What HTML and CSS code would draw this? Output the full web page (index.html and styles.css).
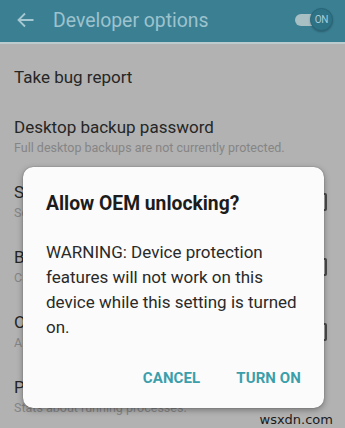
FILE: index.html
```html
<!DOCTYPE html>
<html>
<head>
<meta charset="utf-8">
<link rel="stylesheet" href="styles.css">
</head>
<body>
<div class="screen">
  <header class="appbar">
    <svg class="back" width="17" height="16" viewBox="0 0 17 16"><path d="M16.5 8H1.5M8 1.5L1.5 8 8 14.5" fill="none" stroke="#a6c8d2" stroke-width="1.8"/></svg>
    <span class="title">Developer options</span>
    <div class="toggle"><span class="track"></span><span class="thumb">ON</span></div>
  </header>
  <div class="list">
    <div class="item single"><div class="item-title">Take bug report</div></div>
    <div class="item"><div class="item-title">Desktop backup password</div><div class="item-sub">Full desktop backups are not currently protected.</div></div>
    <div class="item"><div class="texts"><div class="item-title">Stay awake</div><div class="item-sub">Screen will never sleep while charging.</div></div><span class="check"></span></div>
    <div class="item"><div class="texts"><div class="item-title">Bluetooth HCI snoop log</div><div class="item-sub">Capture all Bluetooth HCI packets in a file.</div></div><span class="check"></span></div>
    <div class="item"><div class="texts"><div class="item-title">OEM unlocking</div><div class="item-sub">Allow the bootloader to be unlocked.</div></div><span class="check"></span></div>
    <div class="item"><div class="item-title">Process stats</div><div class="item-sub">Stats about running processes.</div></div>
  </div>
  <div class="dialog">
    <div class="dlg-title">Allow OEM unlocking?</div>
    <div class="dlg-body">WARNING: Device protection features will not work on this device while this setting is turned on.</div>
    <div class="dlg-actions"><span class="btn">CANCEL</span><span class="btn">TURN ON</span></div>
  </div>
  <div class="watermark">wsxdn.com</div>
</div>
</body>
</html>
```
FILE: styles.css
```css
* { box-sizing: border-box; }
html, body { margin: 0; padding: 0; }
body { font-family: Roboto, "Noto Sans", sans-serif; background: #b2b2b2; }
.screen { position: relative; width: 345px; height: 428px; overflow: hidden; background: #b2b2b2; }
.appbar { height: 42px; background: #3b7f93; display: flex; align-items: center; padding-left: 17px; border-bottom: 2px solid #bccbce; box-sizing: content-box; }
.back { margin-right: 19px; margin-top: -2px; }
.title { font-size: 19.4px; color: #9cc3ce; flex: 1; margin-top: -2px; }
.toggle { position: relative; width: 38px; height: 24px; margin-right: 12px; margin-top: -3px; }
.track { position: absolute; left: 0; top: 6px; width: 26px; height: 12px; border-radius: 6px; background: #a8bfc3; }
.thumb { position: absolute; right: 0; top: 0; width: 23px; height: 23px; border-radius: 50%; background: #2e7286; border: 1px solid #286679; box-shadow: 0 1px 2px rgba(0,0,0,0.25); color: #a9cdd7; font-size: 10px; display: flex; align-items: center; justify-content: center; letter-spacing: -0.3px; }
.list { padding-top: 10px; }
.item { padding: 12px 18px 12px 14px; display: flex; flex-direction: column; }
.item:has(.check) { flex-direction: row; align-items: center; }
.texts { flex: 1; }
.item.single { padding-bottom: 16px; }
.item-title { font-size: 17px; line-height: 22px; color: #262626; }
.item-sub { font-size: 12.5px; line-height: 19px; color: #858585; white-space: nowrap; }
.check { width: 18px; height: 18px; border: 2px solid #4a4a4a; border-radius: 2px; flex: none; }
.dialog { position: absolute; left: 23px; top: 167px; width: 301px; height: 241px; background: #fbfbfb; border-radius: 10px; box-shadow: 0 2px 6px rgba(0,0,0,0.35), 0 0 1px rgba(0,0,0,0.5); padding: 25px 16px 12px 23px; display: flex; flex-direction: column; }
.dlg-title { font-size: 19.3px; font-weight: bold; line-height: 24px; color: #1c1c1c; }
.dlg-body { margin-top: 24px; font-size: 17px; line-height: 25px; color: #2a2a2a; }
.dlg-actions { margin-top: auto; height: 36px; display: flex; justify-content: flex-end; align-items: center; gap: 36px; padding-right: 7px; }
.btn { font-size: 15px; font-weight: bold; color: #3b9fab; letter-spacing: 0.1px; }
.watermark { position: absolute; right: 12px; bottom: 1px; font-family: "DejaVu Sans", sans-serif; font-size: 13px; color: #1a1a1a; }
```
